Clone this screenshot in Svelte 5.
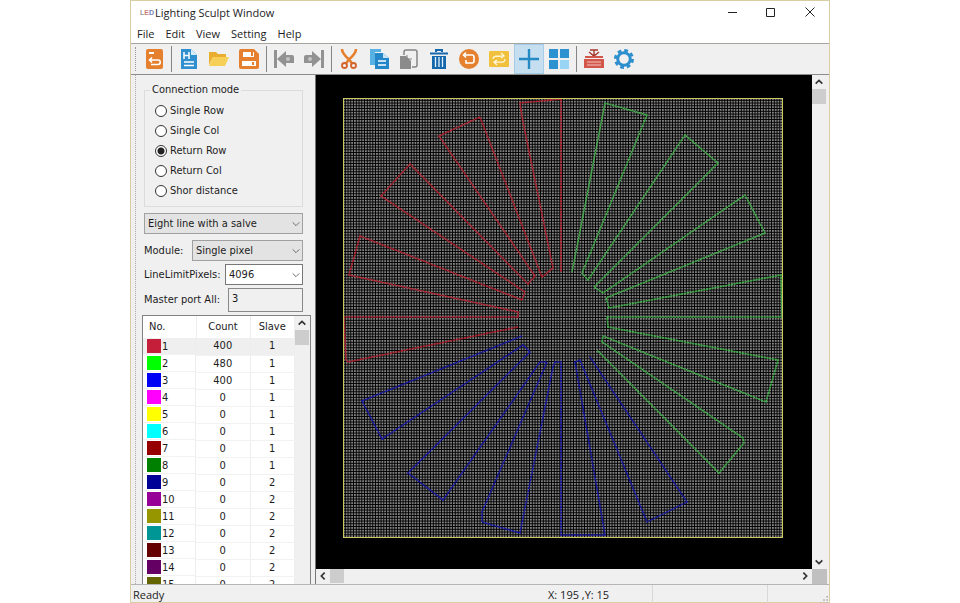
<script lang="ts">
    type Line = { id: number; color: string; count: number; slave: number };

    const menus = ['File', 'Edit', 'View', 'Setting', 'Help'];
    const modes = ['Single Row', 'Single Col', 'Return Row', 'Return Col', 'Shor distance'];

    let mode = $state('Return Row');
    let masterPorts = $state('3');
    let activeTool = $state('Crosshair');

    const lines: Line[] = [
        { id: 1, color: '#c41e3a', count: 400, slave: 1 },
        { id: 2, color: '#00ff00', count: 480, slave: 1 },
        { id: 3, color: '#0000f5', count: 400, slave: 1 },
        { id: 4, color: '#ff00ff', count: 0, slave: 1 },
        { id: 5, color: '#ffff00', count: 0, slave: 1 },
        { id: 6, color: '#00ffff', count: 0, slave: 1 },
        { id: 7, color: '#960000', count: 0, slave: 1 },
        { id: 8, color: '#008000', count: 0, slave: 1 },
        { id: 9, color: '#000096', count: 0, slave: 2 },
        { id: 10, color: '#960096', count: 0, slave: 2 },
        { id: 11, color: '#969600', count: 0, slave: 2 },
        { id: 12, color: '#009696', count: 0, slave: 2 },
        { id: 13, color: '#640000', count: 0, slave: 2 },
        { id: 14, color: '#640064', count: 0, slave: 2 },
        { id: 15, color: '#646400', count: 0, slave: 2 }
    ];

    // wiring of each line, in board pixels
    const wires = [
        {
            color: '#b3202f',
            points: '218,174 218,1 177,5 179,19 210,170 199,179 137,19 96,38 192,178 185,186 67,66 38,98 182,194 179,202 17,138 6,177 175,214 175,219 1,219 3,262 5,264 175,229'
        },
        {
            color: '#3fae48',
            points: '229,174 262,5 304,17 239,175 245,182 342,37 375,65 251,189 260,195 402,97 422,135 263,200 266,210 438,177 439,219 264,219 265,229 435,262 423,304 260,238 259,244 400,340 401,345 376,375 254,252'
        },
        {
            color: '#1414a8',
            points: '179,238 19,303 39,341 180,247 187,254 65,375 100,402 197,264 204,264 139,414 139,424 177,435 210,269 212,264 218,264 218,437 262,437 232,264 237,262 304,424 344,404 247,259'
        }
    ];

    const toolGroups = [
        [{ name: 'Back', icon: `<rect x="2" y="0" width="17" height="20" rx="2" fill="#e5802f"/><rect x="5" y="3" width="5" height="2" fill="#fff"/><path d="M8 8.5 5.5 11 8 13.500M5.500 11H14a2 2 0 0 1 0 4.500H7" fill="none" stroke="#fff" stroke-width="1.600"/>` }],
        [
            { name: 'New', icon: `<path d="M2 0h10l6 6v14H2z" fill="#2f8fcf"/><path d="M12 0v6h6z" fill="#d7ecfa"/><path d="M5 3v7M10 3v7M5 6.500h5M5 13h10M5 16.500h10" fill="none" stroke="#fff" stroke-width="1.500"/>` },
            { name: 'Open', icon: `<path d="M0 3h7l2 2h8v3H4L0 16z" fill="#e9ad2f"/><path d="M4 8h16l-4 9H0z" fill="#f6cf57"/>` },
            { name: 'Save', icon: `<path d="M2 0h13l5 5v13a2 2 0 0 1-2 2H2a2 2 0 0 1-2-2V2a2 2 0 0 1 2-2z" fill="#e5802f"/><path d="M4 3h11v5H4zM3 12h14v5H3z" fill="#fff"/><rect x="12" y="3" width="2" height="4" fill="#e5802f"/><rect x="13" y="13" width="2" height="3" fill="#e5802f"/>` }
        ],
        [
            { name: 'Previous', icon: `<path d="M0 1h3v18H0zM3 10l9-8v4h6a2 2 0 0 1 2 2v6h-8v4z" fill="#929292"/><circle cx="14" cy="10" r="2" fill="#c4c4c4"/>` },
            { name: 'Next', icon: `<path d="M17 1h3v18h-3zM17 10 8 2v4H2a2 2 0 0 0-2 2v6h8v4z" fill="#929292"/><circle cx="6" cy="10" r="2" fill="#c4c4c4"/>` }
        ],
        [
            { name: 'Cut', icon: `<path d="M3 0c0 4 3 7 7 10.500L13.500 15M17 0c0 4-3 7-7 10.500L6.500 15" fill="none" stroke="#e5802f" stroke-width="2.600"/><circle cx="5.500" cy="16.500" r="2.500" fill="none" stroke="#d4632b" stroke-width="1.800"/><circle cx="14.500" cy="16.500" r="2.500" fill="none" stroke="#d4632b" stroke-width="1.800"/>` },
            { name: 'Copy', icon: `<path d="M1 0h11v3H6v13H1z" fill="#58b1e3"/><path d="M6 4h8l6 5v11H6z" fill="#2387c9"/><path d="M14 4v5h6z" fill="#c7e4f7"/><path d="M9 12h8M9 16h8" stroke="#fff" stroke-width="1.500"/>` },
            { name: 'Paste', icon: `<path d="M5 6V3a2 2 0 0 1 2-2h9a2 2 0 0 1 2 2v13a2 2 0 0 1-2 2h-3" fill="none" stroke="#858585" stroke-width="1.500"/><path d="M1 7h6l5 5v8H1z" fill="#8b8b8b"/><path d="M8 6v4h5" fill="none" stroke="#858585"/>` },
            { name: 'Delete', icon: `<path d="M7 3V1h6v2M1 4.500h18" fill="none" stroke="#1668ad" stroke-width="2"/><path d="M3 7h14v13H3z" fill="#1668ad"/><path d="M6.500 8v10M10 8v10M13.500 8v10" stroke="#e5f1fa" stroke-width="1.300"/>` },
            { name: 'Undo', icon: `<circle cx="10" cy="10" r="10" fill="#e5802f"/><path d="M7 3.500 4.500 6 7 8.500M5 6h8a2 2 0 0 1 2 2v4a2 2 0 0 1-2 2H7v-3" fill="none" stroke="#fff" stroke-width="1.600"/>` },
            { name: 'Swap', icon: `<rect x="0" y="2" width="20" height="16" rx="1" fill="#f1c13d"/><path d="M4 10c0-3 2-3 11-3M12 4l3 3-3 2M16 10c0 4-2 3-11 3M8 11l-3 2 3 3" fill="none" stroke="#fff8dc" stroke-width="1.300"/>` },
            { name: 'Crosshair', icon: `<path d="M10 0v20M0 10h20" stroke="#268bc5" stroke-width="2.400"/>` },
            { name: 'Grid', icon: `<path d="M0 0h9v9H0zM11 0h9v9h-9zM0 11h9v9H0z" fill="#2e91d0"/><path d="M11 11h9v9h-9z" fill="#9ad4f5"/>` }
        ],
        [
            { name: 'Toolbox', icon: `<path d="M6 1h8M10 1v5M5 3l5 4 5-4" fill="none" stroke="#a63a2e" stroke-width="1.400"/><path d="M1 7h18v2H1zM0 10h20v9H0z" fill="#d2574a"/><path d="M3 13h14M3 16h14" stroke="#f3c4bd" stroke-width="1.200"/>` },
            { name: 'Options', icon: `<circle cx="10" cy="10" r="8.500" fill="none" stroke="#2e8fce" stroke-width="3" stroke-dasharray="3.700 2.975"/><circle cx="10" cy="10" r="6.300" fill="none" stroke="#2e8fce" stroke-width="3"/>` }
        ]
    ];

    const chevrons = {
        up: 'M2 8 6 4l4 4',
        down: 'M2 4l4 4 4-4',
        left: 'M8 2 4 6l4 4',
        right: 'M4 2l4 4-4 4'
    };
</script>

{#snippet arrow(dir: keyof typeof chevrons)}
    <button class="arrow {dir}" aria-label="Scroll {dir}">
        <svg viewBox="0 0 12 12"><path d={chevrons[dir]} /></svg>
    </button>
{/snippet}

{#snippet dropdown(id: string, value: string, label: string)}
    <div class="dropdown">
        <select {id} aria-label={label}><option>{value}</option></select>
        <svg viewBox="0 0 12 12"><path d={chevrons.down} /></svg>
    </div>
{/snippet}

<div class="window">
    <header class="titlebar">
        <span class="logo"><i>L</i><i>E</i><i>D</i></span>
        <h1>Lighting Sculpt Window</h1>
        <div class="controls">
            <button aria-label="Minimize"><svg viewBox="0 0 10 10"><path d="M1 5.500h9" /></svg></button>
            <button aria-label="Maximize"><svg viewBox="0 0 10 10"><path d="M.5 1.500h8v8h-8z" /></svg></button>
            <button aria-label="Close"><svg viewBox="0 0 10 10"><path d="M.5.5l9 9M9.500.5l-9 9" /></svg></button>
        </div>
    </header>

    <nav class="menubar">
        {#each menus as menu}
            <button>{menu}</button>
        {/each}
    </nav>

    <div class="toolbar" role="toolbar">
        {#each toolGroups as group}
            <div class="group">
                {#each group as tool}
                    <button class="tool" class:active={activeTool === tool.name} aria-label={tool.name} onclick={() => (activeTool = tool.name)}>
                        <svg viewBox="0 0 20 20">{@html tool.icon}</svg>
                    </button>
                {/each}
            </div>
        {/each}
    </div>

    <div class="main">
        <aside>
            <div class="panel">
                <fieldset>
                    <legend>Connection mode</legend>
                    <div class="radios">
                        {#each modes as name}
                            <label>
                                <input type="radio" name="mode" value={name} bind:group={mode} />
                                {name}
                            </label>
                        {/each}
                    </div>
                </fieldset>

                <div class="field wide">{@render dropdown('layout', 'Eight line with a salve', 'Line layout')}</div>
                <div class="field module">
                    <label for="module">Module:</label>
                    {@render dropdown('module', 'Single pixel', 'Module')}
                </div>
                <div class="field limit">
                    <label for="limit">LineLimitPixels:</label>
                    {@render dropdown('limit', '4096', 'LineLimitPixels')}
                </div>
                <div class="field master">
                    <label for="master">Master port All:</label>
                    <input id="master" bind:value={masterPorts} />
                </div>

                <div class="list">
                    <div class="rows">
                        <table>
                            <thead>
                                <tr><th>No.</th><th>Count</th><th>Slave</th></tr>
                            </thead>
                            <tbody>
                                {#each lines as line, i}
                                    <tr class:selected={i === 0}>
                                        <td><span class="swatch" style="background: {line.color}"></span>{line.id}</td>
                                        <td>{line.count}</td>
                                        <td>{line.slave}</td>
                                    </tr>
                                {/each}
                            </tbody>
                        </table>
                    </div>
                    <div class="scroll vertical">
                        {@render arrow('up')}
                        <div class="thumb"></div>
                    </div>
                </div>
            </div>
        </aside>

        <div class="canvas">
            <svg viewBox="0 0 496 494" role="img" aria-label="Wiring board">
                <defs>
                    <pattern id="leds" width="2.75" height="2.75" patternUnits="userSpaceOnUse">
                        <rect width="1.800" height="1.800" fill="#858585" />
                    </pattern>
                </defs>
                <g transform="translate(27 23)">
                    <rect width="440" height="440" fill="url(#leds)" />
                    {#each wires as wire}
                        <polyline points={wire.points} stroke={wire.color} />
                    {/each}
                    <rect class="frame" x="0.500" y="0.500" width="439" height="439" />
                </g>
            </svg>
        </div>
        <div class="scroll vertical">
            {@render arrow('up')}
            <div class="thumb"></div>
            {@render arrow('down')}
        </div>
        <div class="scroll horizontal">
            {@render arrow('left')}
            <div class="thumb"></div>
            {@render arrow('right')}
        </div>
        <div class="corner"></div>
    </div>

    <footer>
        <span>Ready</span>
        <span>X: 195 ,Y: 15</span>
        <span></span>
        <span><svg viewBox="0 0 10 10"><path d="M8 0h2v2H8zM8 4h2v2H8zM8 8h2v2H8zM4 4h2v2H4zM4 8h2v2H4zM0 8h2v2H0z" /></svg></span>
    </footer>
</div>

<style>
    :global(body) {
        background: #fff;
    }

    .window {
        box-sizing: border-box;
        display: flex;
        flex-direction: column;
        height: 100vh;
        margin: 0 130px;
        border: 1px solid #d9cda4;
        background: #f0f0f0;
        color: #1c1c1c;
        font: 11px/16px 'Open Sans', sans-serif;
    }

    button {
        padding: 0;
        border: 0;
        background: none;
        color: inherit;
        font: inherit;
    }

    .titlebar {
        display: flex;
        align-items: center;
        height: 24px;
        padding-left: 9px;
        background: #fff;
    }
    .logo {
        width: 15px;
        font: bold 7px/10px 'Liberation Sans', sans-serif;
    }
    .logo i { font-style: normal; color: #999; }
    .logo i:nth-child(2) { color: #c77f77; }
    .logo i:nth-child(3) { color: #7584b5; }
    h1 {
        margin: 0;
        font-size: 11px;
        font-weight: 400;
    }
    .controls {
        display: flex;
        margin-left: auto;
    }
    .controls button {
        width: 39px;
        height: 24px;
    }
    .controls svg {
        width: 10px;
        height: 10px;
        fill: none;
        stroke: #222;
    }

    .menubar {
        display: flex;
        gap: 11px;
        height: 18px;
        padding-left: 6px;
        border-bottom: 1px solid #a5a5a0;
        background: #fff;
    }

    .toolbar {
        display: flex;
        height: 30px;
        padding-left: 4px;
        border-bottom: 1px solid #8c8c8c;
    }
    .toolbar::before {
        content: '';
        width: 4px;
        margin: 3px 0;
        border-left: 1px dotted #999;
        box-sizing: border-box;
    }
    .group {
        display: flex;
    }
    .group + .group::before {
        content: '';
        width: 1px;
        margin: 2px;
        background: #858585;
    }
    .tool {
        display: grid;
        place-items: center;
        box-sizing: border-box;
        width: 30px;
        height: 30px;
    }
    .tool.active {
        border: 1px solid #a6cce8;
        background: #c5dff1;
    }
    .tool svg {
        width: 20px;
        height: 20px;
    }

    .main {
        display: grid;
        grid-template: minmax(0, 1fr) 15px / 185px minmax(0, 1fr) 17px;
        flex: 1;
        min-height: 0;
        font-family: 'DejaVu Sans Condensed', 'Open Sans', sans-serif;
    }

    aside {
        grid-row: 1 / 3;
        display: flex;
        min-height: 0;
        box-sizing: border-box;
        padding-left: 4px;
        border-right: 1px solid #777;
    }
    aside::before {
        content: '';
        width: 7px;
        border-left: 1px dotted #aaa;
        box-sizing: border-box;
    }
    .panel {
        display: flex;
        flex: 1;
        flex-direction: column;
        min-width: 0;
        padding: 7px 4px 0 0;
    }

    fieldset {
        box-sizing: border-box;
        width: 159px;
        height: 125px;
        margin: 0 2px 6px;
        padding: 5px 10px;
        border: 1px solid #dcdcdc;
    }
    legend {
        margin-left: -5px;
        padding: 0 2px;
    }
    .radios {
        display: grid;
        gap: 4px;
    }
    .radios label {
        display: flex;
        align-items: center;
        gap: 3px;
    }
    .radios input {
        appearance: none;
        box-sizing: border-box;
        width: 12px;
        height: 12px;
        margin: 0;
        border: 1px solid #333;
        border-radius: 50%;
        background: #fff;
    }
    .radios input:checked {
        background: radial-gradient(circle, #222 3px, #fff 4px);
    }

    .field {
        display: flex;
        align-items: center;
        width: 159px;
        margin: 0 2px 3px;
        white-space: nowrap;
    }
    .field.wide { margin-bottom: 6px; }
    .field.wide .dropdown { width: 159px; }
    .module .dropdown { width: 111px; }
    .limit .dropdown { width: 78px; }
    .dropdown {
        display: grid;
        align-items: center;
        margin-left: auto;
    }
    .dropdown > :global(*) {
        grid-area: 1 / 1;
    }
    select,
    .field input {
        appearance: none;
        box-sizing: border-box;
        width: 100%;
        height: 21px;
        padding: 0 3px;
        border: 1px solid #a0a0a0;
        border-radius: 0;
        background: #e3e3e3;
        color: inherit;
        font: inherit;
    }
    .limit select {
        background: #fff;
        border-color: #777;
    }
    .field input {
        width: 75px;
        height: 24px;
        margin-left: auto;
        padding-bottom: 3px;
        border-color: #888;
        background: #f0f0f0;
    }
    .dropdown svg {
        justify-self: end;
        width: 10px;
        height: 10px;
        margin-right: 2px;
        fill: none;
        stroke: #555;
        pointer-events: none;
    }

    .list {
        display: flex;
        flex: 1;
        min-height: 0;
        box-sizing: border-box;
        width: 169px;
        border: 1px solid #828282;
        border-bottom: 0;
        background: #fff;
    }
    .rows {
        flex: 1;
        overflow: hidden;
    }
    table {
        width: 100%;
        border-collapse: collapse;
        table-layout: fixed;
    }
    th,
    td {
        height: 16px;
        padding: 0;
        border-right: 1px solid #ededed;
        border-bottom: 1px solid #f2f2f2;
        font-weight: 400;
        text-align: center;
    }
    th {
        height: 22px;
        border-bottom: 0;
    }
    th:first-child {
        width: 53px;
        padding-left: 6px;
        box-sizing: border-box;
        text-align: left;
    }
    th:nth-child(2) { width: 53px; }
    td:first-child {
        display: flex;
        gap: 1px;
        padding-left: 4px;
        line-height: 17px;
        text-align: left;
    }
    .swatch {
        width: 14px;
        height: 14px;
        margin-top: 1px;
    }
    .selected { background: #efefef; }

    .canvas {
        background: #000;
    }
    .canvas svg {
        display: block;
        width: 100%;
        height: 100%;
    }
    polyline {
        fill: none;
        stroke-width: 1.6;
        stroke-dasharray: 2.2 0.6;
    }
    .frame {
        fill: none;
        stroke: #c9c95c;
    }

    .scroll {
        display: flex;
        background: #f0f0f0;
    }
    .vertical {
        flex-direction: column;
        width: 15px;
    }
    .arrow {
        display: grid;
        place-items: center;
        width: 14px;
        height: 14px;
    }
    .arrow svg {
        width: 10px;
        height: 10px;
        fill: none;
        stroke: #333;
        stroke-width: 2;
    }
    .arrow.down {
        margin-top: auto;
    }
    .arrow.right {
        margin-left: auto;
    }
    .thumb {
        width: 14px;
        height: 15px;
        background: #cdcdcd;
    }
    .horizontal .thumb {
        height: 14px;
    }
    .corner {
        width: 15px;
        background: #c0c0c0;
    }

    footer {
        display: grid;
        grid-template-columns: 415px 107px 115px 1fr;
        height: 17px;
        border-top: 1px solid #b5b5b5;
        line-height: 20px;
    }
    footer span {
        padding-left: 2px;
        border-right: 1px solid #d8d8d8;
    }
    footer span:first-child,
    footer span:last-child {
        border: 0;
    }
    footer span:last-child {
        display: flex;
        align-items: flex-end;
        justify-content: flex-end;
    }
    footer svg {
        width: 8px;
        height: 8px;
        margin: 1px;
        fill: #aaa;
    }
</style>
